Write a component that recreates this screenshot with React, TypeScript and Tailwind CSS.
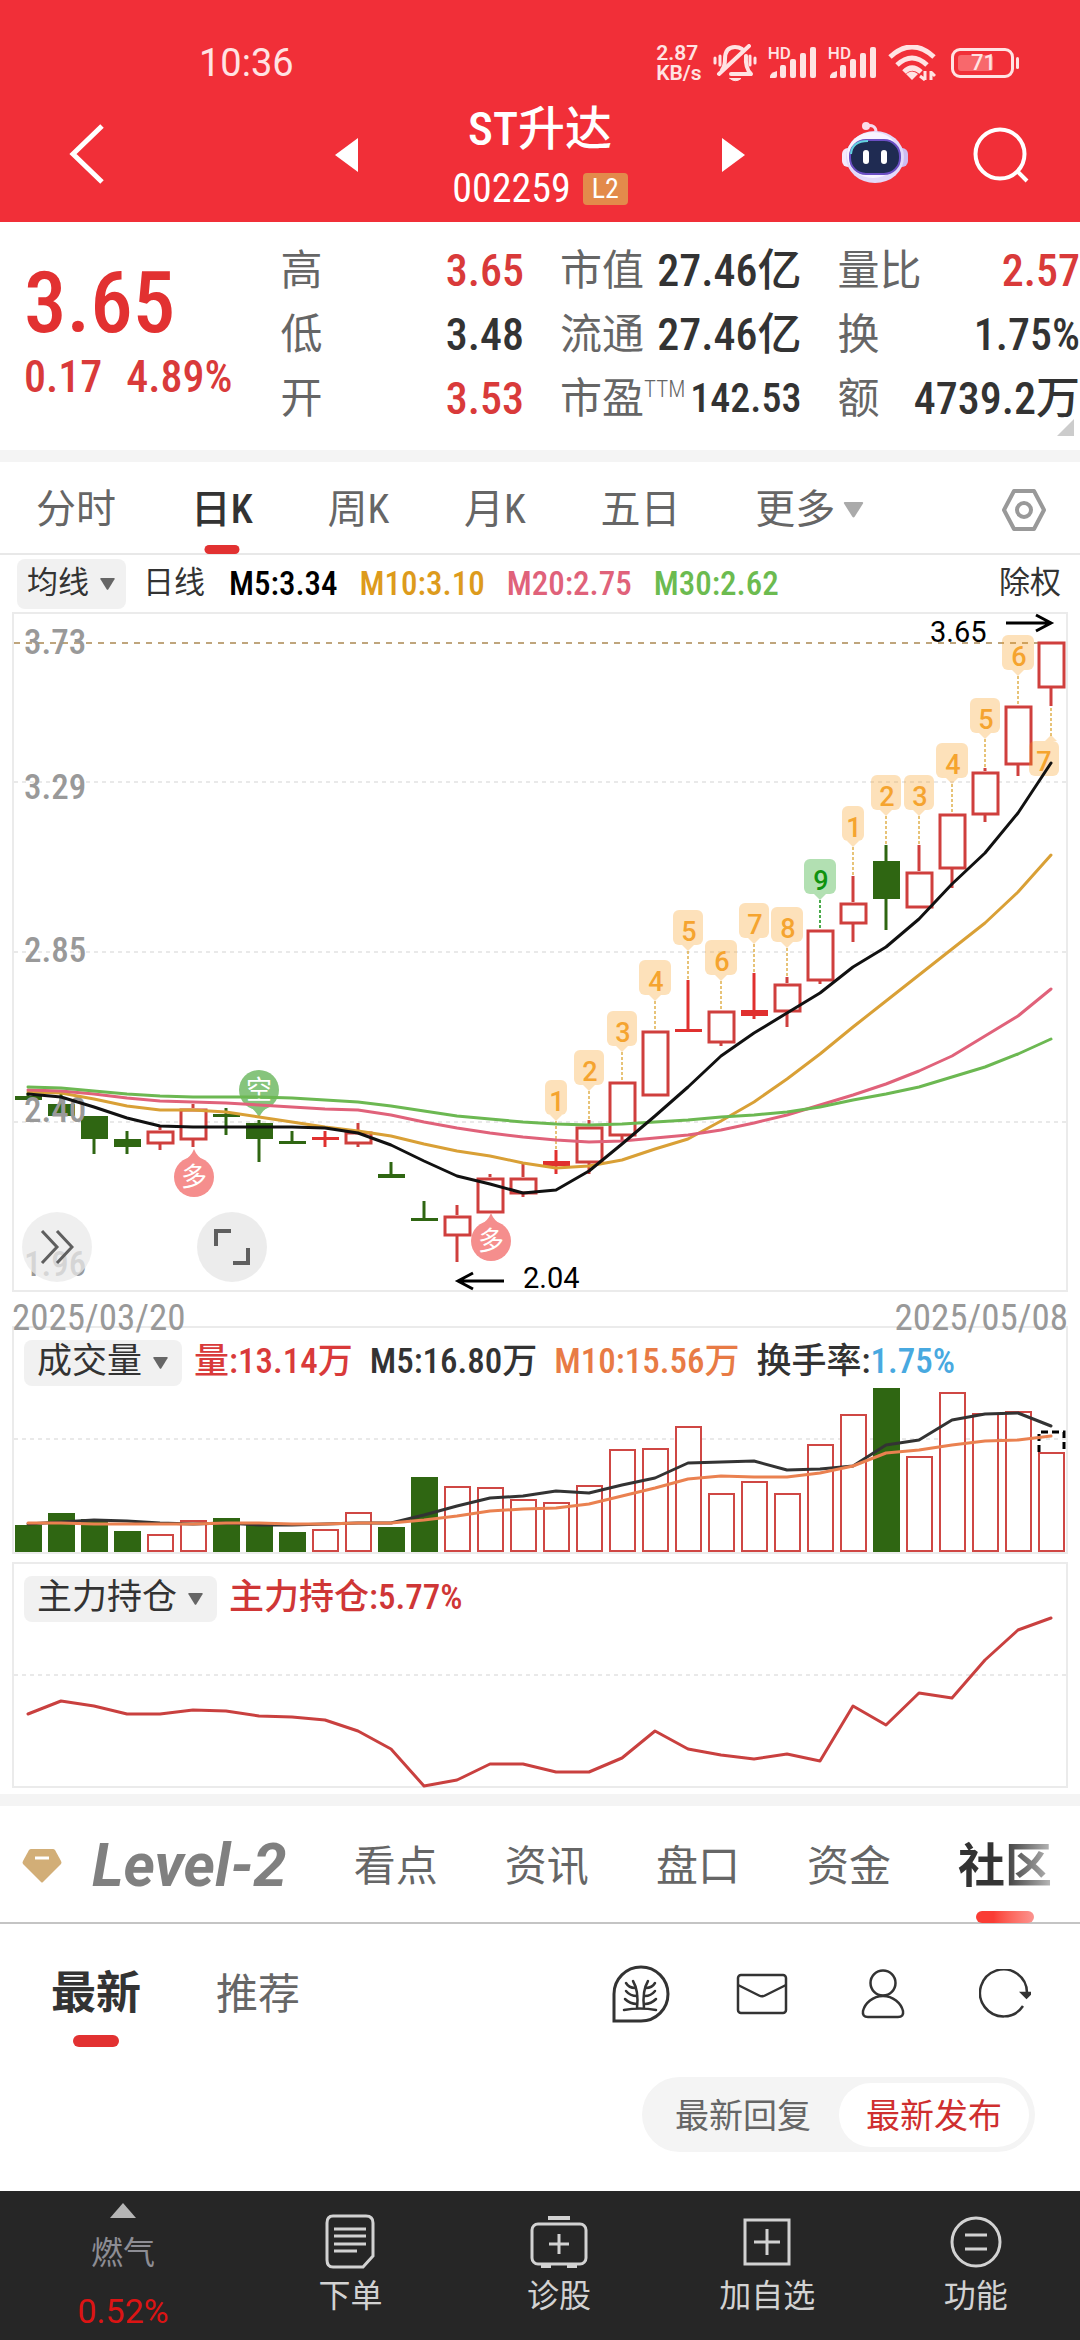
import type { ReactNode } from "react";

const FIRST_X = 28;
const STEP = 33;
const xAt = (i: number) => FIRST_X + STEP * i;

type Kind = "up" | "down" | "solid";
type Candle = { kind: Kind; high: number; top: number; bottom: number; low: number };

const c = (kind: Kind, high: number, top: number, bottom: number, low: number): Candle => ({
  kind,
  high,
  top,
  bottom,
  low,
});

const CANDLES: Candle[] = [
  c("down", 1093, 1096, 1100, 1100),
  c("down", 1093, 1104, 1116, 1116),
  c("down", 1116, 1116, 1139, 1154),
  c("down", 1131, 1139, 1147, 1154),
  c("up", 1127, 1130, 1144, 1150),
  c("up", 1104, 1108, 1140, 1147),
  c("down", 1108, 1114, 1117, 1135),
  c("down", 1120, 1123, 1139, 1162),
  c("down", 1131, 1141, 1144, 1144),
  c("solid", 1131, 1137, 1140, 1147),
  c("up", 1123, 1131, 1144, 1147),
  c("down", 1162, 1174, 1178, 1178),
  c("down", 1201, 1218, 1221, 1221),
  c("up", 1205, 1215, 1236, 1262),
  c("up", 1174, 1177, 1213, 1213),
  c("up", 1164, 1177, 1194, 1197),
  c("solid", 1150, 1161, 1166, 1174),
  c("up", 1120, 1126, 1163, 1174),
  c("up", 1081, 1081, 1136, 1140),
  c("up", 1030, 1030, 1096, 1096),
  c("solid", 980, 1029, 1032, 1032),
  c("up", 1010, 1010, 1043, 1046),
  c("solid", 973, 1010, 1016, 1019),
  c("up", 977, 983, 1012, 1027),
  c("up", 929, 929, 981, 984),
  c("up", 876, 902, 924, 942),
  c("down", 845, 861, 899, 930),
  c("up", 845, 871, 908, 908),
  c("up", 813, 813, 869, 888),
  c("up", 768, 771, 815, 822),
  c("up", 705, 705, 765, 776),
  c("up", 641, 641, 688, 706),
];

const MA5 = [1094, 1097, 1107, 1118, 1126, 1127, 1127, 1127, 1127, 1128, 1133, 1145, 1161, 1176, 1184, 1193, 1190, 1171, 1144, 1116, 1087, 1056, 1033, 1013, 993, 967, 947, 919, 884, 853, 813, 763];
const MA10 = [1092, 1093, 1099, 1106, 1110, 1110, 1112, 1117, 1122, 1127, 1131, 1136, 1144, 1151, 1156, 1163, 1168, 1166, 1160, 1149, 1139, 1121, 1102, 1079, 1054, 1027, 1001, 975, 949, 923, 892, 855];
const MA20 = [1090, 1091, 1094, 1098, 1101, 1102, 1103, 1105, 1107, 1109, 1110, 1115, 1122, 1128, 1133, 1137, 1140, 1142, 1141, 1138, 1135, 1130, 1123, 1115, 1105, 1095, 1084, 1071, 1056, 1036, 1016, 989];
const MA30 = [1087, 1088, 1091, 1094, 1096, 1097, 1097, 1097, 1098, 1100, 1102, 1106, 1111, 1116, 1119, 1122, 1124, 1125, 1124, 1122, 1120, 1117, 1115, 1112, 1107, 1100, 1094, 1087, 1077, 1067, 1054, 1039];

const VOLUME_TOPS = [1525, 1513, 1519, 1531, 1534, 1520, 1518, 1524, 1532, 1529, 1512, 1527, 1477, 1486, 1487, 1499, 1502, 1485, 1449, 1448, 1426, 1493, 1481, 1493, 1444, 1414, 1388, 1456, 1392, 1413, 1411, 1452];
const VOLUME_DOWN = new Set([0, 1, 2, 3, 6, 7, 8, 11, 12, 26]);
const VOL_M5 = [1524, 1522, 1520, 1521, 1523, 1524, 1523, 1525, 1525, 1524, 1523, 1523, 1515, 1506, 1498, 1496, 1491, 1493, 1485, 1478, 1463, 1462, 1461, 1470, 1469, 1466, 1445, 1440, 1420, 1414, 1413, 1426];
const VOL_M10 = [1523, 1523, 1524, 1524, 1524, 1524, 1523, 1523, 1524, 1524, 1523, 1523, 1520, 1516, 1511, 1509, 1508, 1504, 1496, 1488, 1479, 1476, 1477, 1477, 1473, 1466, 1453, 1450, 1445, 1441, 1440, 1436];
const HOLDING = [1714, 1701, 1706, 1714, 1714, 1710, 1711, 1716, 1717, 1720, 1731, 1749, 1786, 1780, 1764, 1764, 1772, 1772, 1758, 1731, 1749, 1755, 1759, 1754, 1761, 1706, 1725, 1693, 1698, 1660, 1630, 1618];

const TAGS: { i: number; n: number }[] = [
  { i: 16, n: 1 },
  { i: 17, n: 2 },
  { i: 18, n: 3 },
  { i: 19, n: 4 },
  { i: 20, n: 5 },
  { i: 21, n: 6 },
  { i: 22, n: 7 },
  { i: 23, n: 8 },
  { i: 24, n: 9 },
  { i: 25, n: 1 },
  { i: 26, n: 2 },
  { i: 27, n: 3 },
  { i: 28, n: 4 },
  { i: 29, n: 5 },
  { i: 30, n: 6 },
];

const toPoints = (ys: number[]) => ys.map((y, i) => `${xAt(i)},${y}`).join(" ");

function Line({ ys, color, width = 3 }: { ys: number[]; color: string; width?: number }) {
  return <polyline points={toPoints(ys)} fill="none" stroke={color} strokeWidth={width} strokeLinejoin="round" strokeLinecap="round" />;
}

function CandleShape({ x, d }: { x: number; d: Candle }) {
  const color = d.kind === "down" ? "#2f6612" : d.kind === "solid" ? "#e0302f" : "#cf3f3d";
  return (
    <g>
      {d.high < d.top && <path d={`M${x} ${d.high}V${d.top}`} stroke={color} strokeWidth="3" />}
      {d.low > d.bottom && <path d={`M${x} ${d.bottom}V${d.low}`} stroke={color} strokeWidth="3" />}
      {d.kind === "up" ? (
        <rect x={x - 12} y={d.top + 2} width="25" height={d.bottom - d.top - 3} fill="#fff" stroke={color} strokeWidth="3" />
      ) : (
        <rect x={x - 13} y={d.top} width="27" height={d.bottom - d.top} fill={color} />
      )}
    </g>
  );
}

function Tag({ i, n }: { i: number; n: number }) {
  const x = xAt(i);
  const high = CANDLES[i].high;
  const top = high - 70;
  const w = n === 1 ? 22 : n === 9 || (n % 2 === 0 && n > 2) ? 32 : 30;
  const green = n === 9;
  const line = green ? "#0f8f0f" : "#dfb04c";
  const fill = green ? "#009900" : "#f99b1b";
  return (
    <g>
      <path d={`M${x} ${top + 41}V${high}`} stroke={line} strokeWidth="1.5" strokeDasharray="3 2" />
      <g fill={fill} fillOpacity="0.3">
        <rect x={x - w / 2} y={top} width={w} height="35" rx="6" />
        <path d={`M${x - 6} ${top + 35}h12l-6 6z`} />
      </g>
      <text x={x + 1} y={top + 31} textAnchor="middle" className={green ? "fill-[#0f930f] text-[27px] font-medium" : "fill-[#f5a42f] text-[27px] font-medium"}>
        {n}
      </text>
    </g>
  );
}

function Marker({ x, y, label, tip }: { x: number; y: number; label: string; tip: "up" | "down" }) {
  const up = tip === "up";
  return (
    <g>
      <path
        d={up ? `M${x - 11} ${y - 16}Q${x - 3} ${y - 20} ${x} ${y - 28}Q${x + 3} ${y - 20} ${x + 11} ${y - 16}z` : `M${x - 11} ${y + 16}Q${x - 3} ${y + 20} ${x} ${y + 28}Q${x + 3} ${y + 20} ${x + 11} ${y + 16}z`}
        fill={up ? "#f58e8d" : "#86c47c"}
      />
      <circle cx={x} cy={y} r="20" fill={up ? "#f58e8d" : "#86c47c"} />
      <text x={x} y={y + 9} textAnchor="middle" className="fill-white font-['Noto_Sans_CJK_SC',sans-serif] text-[26px]">
        {label}
      </text>
    </g>
  );
}

function MainChart() {
  return (
    <div className="relative mx-3 border-2 border-[#ebebeb]">
      <svg viewBox="14 614 1052 676" className="block h-auto w-full overflow-visible font-['Roboto',sans-serif]" role="img" aria-label="日K线图">
        <path d="M14 643H1066" stroke="#bfa57c" strokeWidth="2" strokeDasharray="6 6" />
        {[782, 952, 1122].map((y) => (
          <path key={y} d={`M14 ${y}H1066`} stroke="#e9e9e9" strokeWidth="2" strokeDasharray="4 4" />
        ))}
        {CANDLES.map((d, i) => (
          <CandleShape key={i} x={xAt(i)} d={d} />
        ))}
        <Marker x={194} y={1177} label="多" tip="up" />
        <Marker x={491} y={1241} label="多" tip="up" />
        <Marker x={259} y={1090} label="空" tip="down" />
        <g className="fill-[#999999] font-['Roboto_Condensed','Roboto',sans-serif] text-[35px] font-medium">
          <text x="24" y="654">3.73</text>
          <text x="24" y="799">3.29</text>
          <text x="24" y="962">2.85</text>
          <text x="24" y="1122">2.40</text>
          <text x="24" y="1276">1.96</text>
        </g>
        {TAGS.map((t) => (
          <Tag key={t.i} i={t.i} n={t.n} />
        ))}
        <path d="M1051 708V736" stroke="#dfb04c" strokeWidth="1.5" strokeDasharray="3 2" />
        <g fill="#f99b1b" fillOpacity="0.3">
          <rect x="1029" y="741" width="30" height="35" rx="6" />
          <path d="M1045 741h12l-6-6z" />
        </g>
        <text x="1044" y="771" textAnchor="middle" className="fill-[#f5a42f] text-[27px] font-medium">7</text>
        <Line ys={MA10} color="#d9a036" />
        <Line ys={MA20} color="#e0627a" />
        <Line ys={MA30} color="#6cb852" />
        <Line ys={MA5} color="#111111" />
        <g stroke="#000" strokeWidth="3" fill="none">
          <path d="M1006 623H1051M1036 615L1051 623L1036 631" />
          <path d="M504 1281H458M473 1273L458 1281L473 1289" />
        </g>
        <text x="930" y="642" className="fill-black text-[29px]">3.65</text>
        <text x="523" y="1288" className="fill-black text-[29px]">2.04</text>
      </svg>
      <div className="absolute bottom-2 left-2 flex gap-[105px]">
        <button aria-label="展开" className="flex size-[70px] items-center justify-center rounded-full bg-[#e9e9e9]/75">
          <svg viewBox="0 0 34 34" className="size-[34px]" fill="none" stroke="#5f5f5f" strokeWidth="3">
            <path d="M2 1L17 17L2 33M17 1L32 17L17 33" />
          </svg>
        </button>
        <button aria-label="全屏" className="flex size-[70px] items-center justify-center rounded-full bg-[#e9e9e9]/85">
          <svg viewBox="0 0 38 38" className="size-[38px]" fill="none" stroke="#5f5f5f" strokeWidth="4">
            <path d="M3 18V3H18M20 35H35V20" />
          </svg>
        </button>
      </div>
    </div>
  );
}

function VolumeChart() {
  return (
    <svg viewBox="14 1385 1052 167" className="block h-auto w-full" role="img" aria-label="成交量图">
      <path d="M14 1439H1066" stroke="#e9e9e9" strokeWidth="2" strokeDasharray="4 4" />
      {VOLUME_TOPS.map((top, i) =>
        VOLUME_DOWN.has(i) ? (
          <rect key={i} x={xAt(i) - 13} y={top} width="27" height={1552 - top} fill="#2f6612" />
        ) : (
          <rect key={i} x={xAt(i) - 12} y={top + 1} width="25" height={1550 - top} fill="#fff" stroke="#cf4744" strokeWidth="2" />
        ),
      )}
      <path d="M1039 1452V1432H1064V1452" fill="none" stroke="#000" strokeWidth="3" strokeDasharray="7 4" />
      <Line ys={VOL_M5} color="#333333" />
      <Line ys={VOL_M10} color="#ea8150" />
    </svg>
  );
}

function HoldingChart() {
  return (
    <svg viewBox="14 1621 1052 165" className="block h-auto w-full overflow-visible" role="img" aria-label="主力持仓图">
      <path d="M14 1675H1066" stroke="#e9e9e9" strokeWidth="2" strokeDasharray="4 4" />
      <Line ys={HOLDING} color="#c9403f" />
    </svg>
  );
}

function Caret({ className }: { className: string }) {
  return (
    <svg viewBox="0 0 18 14" className={className} fill="currentColor">
      <path d="M1.500 0H16.500Q18 0 17.200 1.500L10 13Q9 14.300 8 13L.8 1.500Q0 0 1.500 0z" />
    </svg>
  );
}

function Pill({ children, className }: { children: ReactNode; className: string }) {
  return (
    <button className={`flex items-center gap-[10px] rounded-lg bg-[#f1f1f1] text-[#333] ${className}`}>
      {children}
      <Caret className="h-3 w-[17px] text-[#666]" />
    </button>
  );
}

function Signal() {
  return (
    <span className="flex items-start">
      <span className="-mt-1 font-['Roboto',sans-serif] text-[17px] leading-[20px] font-medium">HD</span>
      <svg viewBox="0 0 48 32" className="-ml-[22px] h-8 w-12" fill="currentColor">
        <path d="M1 31Q0 26 8 24V29Q8 31 6 31z" />
        <rect x="11" y="18" width="6" height="13" rx="2" />
        <rect x="21" y="12" width="6" height="19" rx="2" />
        <rect x="31" y="6" width="6" height="25" rx="2" />
        <rect x="41" y="0" width="6" height="31" rx="2" />
      </svg>
    </span>
  );
}

function StatusBar() {
  return (
    <div className="flex h-[84px] items-end justify-between pr-[61px] pl-[199px] text-[#ffe3e3]">
      <span className="font-['Roboto',sans-serif] text-[38px] leading-[42px]">10:36</span>
      <div className="flex items-center gap-[11px] pb-[1px]">
        <span className="font-['Roboto',sans-serif] text-[21px] leading-[20px] font-semibold">
          2.87
          <br />
          KB/s
        </span>
        <svg viewBox="0 0 44 38" className="h-[38px] w-11" fill="none" stroke="currentColor" strokeWidth="4" strokeLinecap="round">
          <path d="M9 26Q12 22 12 15Q12 3 22 3Q26 3 29 5M33 12Q32 24 38 30H18" strokeLinejoin="round" />
          <path d="M6 30L36 2" />
          <path d="M17 34.500h11Q22.500 39 17 34.500z" fill="currentColor" strokeWidth="1" />
          <path d="M2 14v5M7 12v9M37 12v9M42 14v5" strokeWidth="3" />
        </svg>
        <Signal />
        <Signal />
        <svg viewBox="0 0 48 36" className="h-9 w-12" fill="none" stroke="currentColor" strokeWidth="5">
          <path d="M2 12Q24 -8 46 12M9 20Q24 6 39 20M16 27Q24 19 33 27" />
          <path d="M18 29Q24 24 30 29L24 35z" fill="currentColor" stroke="none" />
          <path d="M37 26v9M37 35l-5-4M43 35v-9M43 27l4 4" strokeWidth="3" />
        </svg>
        <span className="ml-1 flex items-center gap-0.5">
          <span className="flex h-[30px] w-[63px] items-center rounded-[9px] border-3 border-current p-1">
            <span className="flex h-full w-[35px] items-center rounded-[3px] bg-[#f8686c] pl-[13px] font-['Roboto',sans-serif] text-[22px] leading-[18px] font-medium">71</span>
          </span>
          <span className="h-3 w-[3px] rounded bg-current" />
        </span>
      </div>
    </div>
  );
}

function RobotIcon() {
  return (
    <svg viewBox="0 0 66 62" className="h-[62px] w-[66px]">
      <path d="M24 4Q34 2 34 10" fill="none" stroke="#f6d9ee" strokeWidth="3" />
      <circle cx="24" cy="4" r="4" fill="#fbdcea" />
      <rect x="0" y="26" width="12" height="19" rx="6" fill="#f3e9fb" />
      <rect x="54" y="26" width="12" height="19" rx="6" fill="#cdbcf2" />
      <ellipse cx="33" cy="35" rx="29" ry="26" fill="#e3d9fa" />
      <ellipse cx="31" cy="33" rx="26" ry="23" fill="#f8f3ff" />
      <rect x="8" y="18" width="50" height="34" rx="16" fill="#1f2b52" stroke="#6b4fc4" strokeWidth="2" />
      <path d="M9 32Q10 19 26 19" fill="none" stroke="#63d3e0" strokeWidth="2" />
      <rect x="21" y="28" width="6" height="14" rx="3" fill="#fff" />
      <rect x="39" y="28" width="6" height="14" rx="3" fill="#fff" />
    </svg>
  );
}

function Header() {
  return (
    <header className="bg-[#f12f38] text-white">
      <StatusBar />
      <div className="grid h-[138px] grid-cols-[1fr_auto_1fr] items-center pr-[51px] pl-[51px]">
        <button aria-label="返回" className="justify-self-start pt-[2px] pl-[18px]">
          <svg viewBox="0 0 36 60" className="h-[60px] w-9" fill="none" stroke="currentColor" strokeWidth="5">
            <path d="M33 2L4 30L33 58" />
          </svg>
        </button>
        <div className="flex items-center gap-[94px]">
          <button aria-label="上一只" className="pt-1">
            <svg viewBox="0 0 23 34" className="h-[34px] w-[23px]" fill="currentColor"><path d="M23 0V34L0 17z" /></svg>
          </button>
          <div className="flex flex-col items-center">
            <h1 className="text-[47px] leading-[72px] font-medium">ST升达</h1>
            <div className="flex items-center gap-3">
              <span className="text-[40px] leading-[48px]">002259</span>
              <span className="rounded-sm bg-[#e38a4b] px-[9px] text-[28px] leading-[32px]">L2</span>
            </div>
          </div>
          <button aria-label="下一只" className="pt-1">
            <svg viewBox="0 0 23 34" className="h-[34px] w-[23px]" fill="currentColor"><path d="M0 0V34L23 17z" /></svg>
          </button>
        </div>
        <div className="flex items-center gap-[65px] justify-self-end">
          <button aria-label="智能助手"><RobotIcon /></button>
          <button aria-label="搜索" className="pt-1">
            <svg viewBox="0 0 56 56" className="size-14" fill="none" stroke="currentColor" strokeWidth="4">
              <circle cx="27" cy="27" r="24.500" />
              <path d="M44 44L54 54" />
            </svg>
          </button>
        </div>
      </div>
    </header>
  );
}

function Cell({ label, value, red, sup }: { label: string; value: string; red?: boolean; sup?: string }) {
  return (
    <div className="flex h-16 items-center justify-between font-medium whitespace-nowrap">
      <dt className="flex text-[42px] font-normal text-[#666]">
        {label}
        {sup && <sup className="top-0 pt-2 text-[23px] leading-[30px] font-light">{sup}</sup>}
      </dt>
      <dd className={red ? "text-[#d93a3a]" : sup ? "text-[40px] text-[#333]" : "text-[#333]"}>{value}</dd>
    </div>
  );
}

function Quote() {
  return (
    <section className="relative grid grid-cols-[244fr_243fr_241fr_242fr] gap-x-9 pt-[17px] pb-[19px] text-[44px] leading-[64px]">
      <div className="pt-[22px] pl-[24px] font-medium whitespace-nowrap text-[#d93a3a]">
        <div className="text-[85px] leading-[84px] text-[#e23131]">3.65</div>
        <div className="flex gap-[24px]">
          <span>0.17</span>
          <span>4.89%</span>
        </div>
      </div>
      <dl>
        <Cell label="高" value="3.65" red />
        <Cell label="低" value="3.48" />
        <Cell label="开" value="3.53" red />
      </dl>
      <dl>
        <Cell label="市值" value="27.46亿" />
        <Cell label="流通" value="27.46亿" />
        <Cell label="市盈" sup="TTM" value="142.53" />
      </dl>
      <dl>
        <Cell label="量比" value="2.57" red />
        <Cell label="换" value="1.75%" />
        <Cell label="额" value="4739.2万" />
      </dl>
      <svg viewBox="0 0 17 17" className="absolute right-1.5 bottom-3.5 size-[17px]" fill="#cccccc"><path d="M17 0V17H0z" /></svg>
    </section>
  );
}

function PeriodTabs() {
  return (
    <nav className="flex h-[93px] items-center justify-between border-b-2 border-[#e8e8e8] pt-1 pr-[33px] pl-[36px] text-[40px] text-[#666]">
      <button>分时</button>
      <button className="relative font-medium text-[#333]">
        日K
        <span className="absolute top-[65px] left-1/2 h-[9px] w-[35px] -translate-x-1/2 rounded-full bg-[#e23131]" />
      </button>
      <button>周K</button>
      <button>月K</button>
      <button>五日</button>
      <button className="flex items-center gap-2">
        更多
        <Caret className="h-4 w-[21px] text-[#aaa]" />
      </button>
      <button aria-label="设置" className="ml-[62px]">
        <svg viewBox="0 0 46 44" className="h-11 w-[46px]" fill="none" stroke="#999" strokeWidth="4" strokeLinejoin="round">
          <path d="M13 3H33L43 22L33 41H13L3 22z" />
          <circle cx="23" cy="22" r="7" />
        </svg>
      </button>
    </nav>
  );
}

function TreeIcon() {
  return (
    <svg viewBox="0 0 58 58" className="size-[58px]" fill="none" stroke="#333" strokeWidth="3" strokeLinecap="round">
      <path d="M2 56V29A27 27 0 1 1 29 56z" />
      <g strokeWidth="2.500">
        <path d="M12 45Q28 42 44 45M25 43Q27 26 21 16M32 43Q30 26 36 16" />
        <path d="M14 18Q17 23 23 23M14 26Q18 31 25 31M13 34Q18 39 25 39M43 18Q40 23 34 23M43 26Q39 31 33 31M44 34Q39 39 33 39" />
      </g>
    </svg>
  );
}

function NavItem({ label, children }: { label: string; children: ReactNode }) {
  return (
    <button className="flex w-[19.3%] flex-col items-center pt-[22px] text-[32px] leading-[44px]">
      <svg viewBox="0 0 60 56" className="mb-[5px] h-14 w-[60px]" fill="none" stroke="currentColor" strokeWidth="3">{children}</svg>
      {label}
    </button>
  );
}

export default function App() {
  return (
    <div className="w-full overflow-hidden bg-white font-['Roboto_Condensed','Noto_Sans_CJK_SC',sans-serif] text-[#333]">
      <Header />
      <Quote />
      <div className="h-3 bg-[#f4f4f4]" />
      <PeriodTabs />

      <div className="flex h-[57px] items-center pr-[19px] pl-[17px] text-[33px] font-medium whitespace-nowrap">
        <Pill className="mr-[17px] h-[50px] px-[10px] text-[31px] font-normal">均线</Pill>
        <span className="mr-[24px] text-[31px] font-normal">日线</span>
        <span className="mr-[22px] text-black">M5:3.34</span>
        <span className="mr-[22px] text-[#dd9b1c]">M10:3.10</span>
        <span className="mr-[22px] text-[#e0627a]">M20:2.75</span>
        <span className="text-[#6cbb50]">M30:2.62</span>
        <button className="ml-auto text-[31px] font-normal">除权</button>
      </div>

      <MainChart />
      <div className="mx-3 flex h-[34px] justify-between pt-[6px] text-[37px] leading-[40px] text-[#999]">
        <span>2025/03/20</span>
        <span>2025/05/08</span>
      </div>

      <section className="mx-3 border-2 border-[#ebebeb]">
        <div className="flex h-[57px] items-center pt-3 pl-[10px] text-[35px] font-medium whitespace-nowrap">
          <Pill className="mr-[12px] h-[46px] px-[13px] font-normal">成交量</Pill>
          <span className="mr-[17px] text-[#d93a3a]">量:13.14万</span>
          <span className="mr-[17px]">M5:16.80万</span>
          <span className="mr-[17px] text-[#e87b45]">M10:15.56万</span>
          <span>换手率:</span>
          <span className="text-[#48a9e0]">1.75%</span>
        </div>
        <VolumeChart />
      </section>

      <section className="mx-3 mt-[8px] border-2 border-[#ebebeb]">
        <div className="flex h-[57px] items-center pt-3 pl-[10px] text-[35px] font-medium whitespace-nowrap">
          <Pill className="mr-[12px] h-[46px] px-[13px] font-normal">主力持仓</Pill>
          <span className="text-[#cf3636]">主力持仓:5.77%</span>
        </div>
        <HoldingChart />
      </section>

      <div className="mt-[6px] h-3 bg-[#f4f4f4]" />

      <nav className="flex h-[118px] items-center justify-between border-b-2 border-[#c4c4c4] pt-1 pr-[28px] pl-[22px] text-[42px] whitespace-nowrap text-[#666]">
        <button className="flex items-center gap-[30px]">
          <svg viewBox="0 0 40 36" className="h-9 w-10">
            <path d="M9 1H31Q32 1 33 2L39 13Q40 15 39 16L21 34Q20 35 19 34L1 16Q0 15 1 13L7 2Q8 1 9 1z" fill="#d2ae77" />
            <path d="M13 10H27" stroke="#fff" strokeWidth="3" />
          </svg>
          <span className="font-['Roboto',sans-serif] text-[60px] leading-[64px] font-bold text-[#808080] italic">Level-2</span>
        </button>
        <button>看点</button>
        <button>资讯</button>
        <button>盘口</button>
        <button>资金</button>
        <button className="relative text-[47px] font-bold text-[#333]">
          <span className="bg-linear-to-r from-[#333] from-45% to-[#bbb] bg-clip-text text-transparent">社区</span>
          <span className="absolute top-[80px] left-1/2 h-3 w-[58px] -translate-x-1/2 rounded-full bg-linear-to-r from-[#fa3c34] from-30% to-[#fb938f]" />
        </button>
      </nav>

      <div className="flex h-[140px] items-center justify-between pr-[49px] pl-[51px]">
        <nav className="flex items-center gap-[75px] text-[42px]">
          <button className="relative text-[45px] font-bold">
            最新
            <span className="absolute top-[75px] left-1/2 h-3 w-[46px] -translate-x-1/2 rounded-full bg-[#e23131]" />
          </button>
          <button className="text-[#666]">推荐</button>
        </nav>
        <div className="flex items-center">
          <button aria-label="社区" className="mr-[66px]"><TreeIcon /></button>
          <button aria-label="消息" className="mr-[73px]">
            <svg viewBox="0 0 52 42" className="h-[42px] w-[52px]" fill="none" stroke="#333" strokeWidth="2.500">
              <rect x="2" y="2" width="48" height="38" rx="3" />
              <path d="M2 12L23 22.500Q26 24 29 22.500L50 12" />
            </svg>
          </button>
          <button aria-label="我的" className="mr-[74px]">
            <svg viewBox="0 0 44 50" className="h-[50px] w-11" fill="none" stroke="#333" strokeWidth="2.500">
              <circle cx="22" cy="14" r="12.500" />
              <path d="M22 27C12 27 4 34 2 42Q1 48 7 48H37Q43 48 42 42C40 34 32 27 22 27z" />
            </svg>
          </button>
          <button aria-label="刷新">
            <svg viewBox="0 0 52 50" className="h-[50px] w-[52px]" fill="none" stroke="#333" strokeWidth="2.500">
              <path d="M44 37A23.500 23.500 0 1 1 48 24" />
              <path d="M43 24H52L47.500 28.500z" fill="#333" />
            </svg>
          </button>
        </div>
      </div>

      <div className="flex justify-end pt-[13px] pr-[45px] pb-[39px]">
        <div className="flex h-[75px] items-center rounded-full bg-[#f4f4f4] pr-[6px] text-[34px]">
          <button className="pt-1 pr-[28px] pl-[33px] text-[#666]">最新回复</button>
          <button className="h-16 rounded-full bg-white px-[27px] pt-1 text-[#cf2f2f]">最新发布</button>
        </div>
      </div>

      <nav className="flex h-[149px] bg-[#262626] text-[#d2d2d2]">
        <button className="flex flex-1 flex-col items-center pt-[12px] text-[32px]">
          <svg viewBox="0 0 26 15" className="h-[15px] w-[26px]" fill="#b5b5b5"><path d="M13 0L26 15H0z" /></svg>
          <span className="mt-[13px] leading-[44px] text-[#8d8d94]">燃气</span>
          <span className="mt-[16px] font-['Roboto',sans-serif] text-[34px] leading-[40px] text-[#dc1414]">0.52%</span>
        </button>
        <NavItem label="下单">
          <path d="M13 3H46Q53 3 53 10V43L43 54H13Q7 54 7 47V10Q7 3 13 3z" />
          <path d="M14 16H46M14 23H46M14 31H46M14 38H37" />
        </NavItem>
        <NavItem label="诊股">
          <rect x="3" y="11" width="54" height="40" rx="6" />
          <path d="M19 5H41M12 53H22M38 53H48" strokeWidth="4" />
          <path d="M20 31H40M30 21V41" />
        </NavItem>
        <NavItem label="加自选">
          <rect x="8" y="7" width="44" height="44" />
          <path d="M17 29H43M30 16V42" />
        </NavItem>
        <NavItem label="功能">
          <circle cx="30" cy="29" r="24" />
          <path d="M19 22H41M19 36H41" />
        </NavItem>
      </nav>
    </div>
  );
}
